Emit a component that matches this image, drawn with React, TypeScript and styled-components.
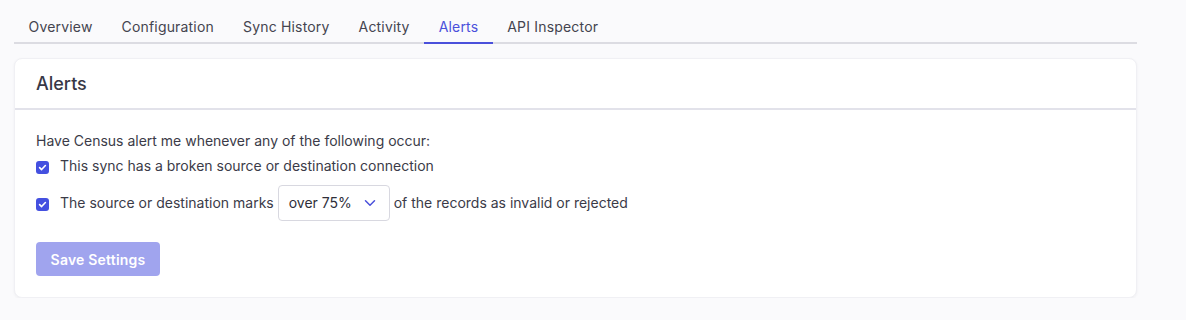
import React, { useState } from 'react';
import styled, { createGlobalStyle } from 'styled-components';

const GlobalStyle = createGlobalStyle`
  body {
    margin: 0;
    background: #fafafc;
    font-family: Inter, "Noto Sans", sans-serif;
    color: #3b3b48;
  }
`;

const tabs = ['Overview', 'Configuration', 'Sync History', 'Activity', 'Alerts', 'API Inspector'];

const Page = styled.div`
  width: 1123px;
  padding: 12px 0 0 14px;
`;

const TabBar = styled.nav`
  display: flex;
  border-bottom: 2px solid #dcdce2;
  height: 32px;
  box-sizing: border-box;
`;

const Tab = styled.div<{ $active?: boolean }>`
  padding: 0 14.5px;
  font-size: 14px;
  letter-spacing: 0.18px;
  line-height: 30px;
  color: ${(p) => (p.$active ? '#4a50db' : '#44444f')};
  border-bottom: 2px solid ${(p) => (p.$active ? '#4a50db' : 'transparent')};
  margin-bottom: -2px;
`;

const Card = styled.section`
  margin-top: 14px;
  background: #fff;
  border: 1px solid #f0f0f4;
  border-radius: 8px;
  box-shadow: 0 1px 3px rgba(30, 30, 60, 0.05);
`;

const CardHeader = styled.header`
  height: 49px;
  display: flex;
  align-items: center;
  padding: 0 21px;
  border-bottom: 2px solid #e2e2ea;
`;

const CardTitle = styled.h2`
  margin: 0;
  font-size: 18px;
  font-weight: 500;
  color: #383846;
`;

const CardBody = styled.div`
  padding: 21px 21px 21px;
  font-size: 14px;
  display: flex;
  flex-direction: column;
  align-items: flex-start;
`;

const Intro = styled.p`
  margin: 0;
  line-height: 20px;
`;

const OptionRow = styled.label<{ $gap: number }>`
  display: flex;
  align-items: center;
  gap: 11px;
  min-height: 20px;
  margin-top: ${(p) => p.$gap}px;
  line-height: 20px;
`;

const Box = styled.span<{ $checked: boolean }>`
  width: 13px;
  height: 13px;
  border-radius: 3px;
  background: ${(p) => (p.$checked ? '#4450e0' : '#fff')};
  border: ${(p) => (p.$checked ? 'none' : '1px solid #c4c4cf')};
  display: flex;
  align-items: center;
  justify-content: center;
  flex-shrink: 0;
  margin-top: 2px;
`;

const Inline = styled.span`
  display: inline-flex;
  align-items: center;
  gap: 4px;
`;

const Select = styled.div`
  width: 112px;
  height: 36px;
  box-sizing: border-box;
  border: 1px solid #d8d8e0;
  border-radius: 4px;
  display: flex;
  align-items: center;
  justify-content: space-between;
  padding: 0 13px 0 10px;
  color: #2f2f3a;
  background: #fff;
`;

const SaveButton = styled.button`
  margin-top: 21px;
  width: 124px;
  height: 34px;
  border: none;
  border-radius: 4px;
  background: #a0a4ee;
  color: #fff;
  font-family: inherit;
  font-size: 14px;
  font-weight: 600;
  letter-spacing: 0.2px;
`;

const Check = () => (
  <svg width="9" height="9" viewBox="0 0 10 10" fill="none">
    <path d="M1.8 5.2 4 7.3 8.2 2.8" stroke="#fff" strokeWidth="1.8" strokeLinecap="round" strokeLinejoin="round" />
  </svg>
);

const Chevron = () => (
  <svg width="12" height="8" viewBox="0 0 12 8" fill="none">
    <path d="M1.5 1.8 6 6.2 10.5 1.8" stroke="#4a50db" strokeWidth="1.5" strokeLinecap="round" strokeLinejoin="round" />
  </svg>
);

const Checkbox = ({ checked, onToggle }: { checked: boolean; onToggle: () => void }) => (
  <Box $checked={checked} onClick={onToggle}>
    {checked && <Check />}
  </Box>
);

export default function App() {
  const [broken, setBroken] = useState(true);
  const [invalid, setInvalid] = useState(true);

  return (
    <Page>
      <GlobalStyle />
      <TabBar>
        {tabs.map((t) => (
          <Tab key={t} $active={t === 'Alerts'}>
            {t}
          </Tab>
        ))}
      </TabBar>
      <Card>
        <CardHeader>
          <CardTitle>Alerts</CardTitle>
        </CardHeader>
        <CardBody>
          <Intro>Have Census alert me whenever any of the following occur:</Intro>
          <OptionRow $gap={5}>
            <Checkbox checked={broken} onToggle={() => setBroken(!broken)} />
            <span>This sync has a broken source or destination connection</span>
          </OptionRow>
          <OptionRow $gap={9}>
            <Checkbox checked={invalid} onToggle={() => setInvalid(!invalid)} />
            <Inline>
              The source or destination marks
              <Select>
                over 75%
                <Chevron />
              </Select>
              of the records as invalid or rejected
            </Inline>
          </OptionRow>
          <SaveButton>Save Settings</SaveButton>
        </CardBody>
      </Card>
    </Page>
  );
}
